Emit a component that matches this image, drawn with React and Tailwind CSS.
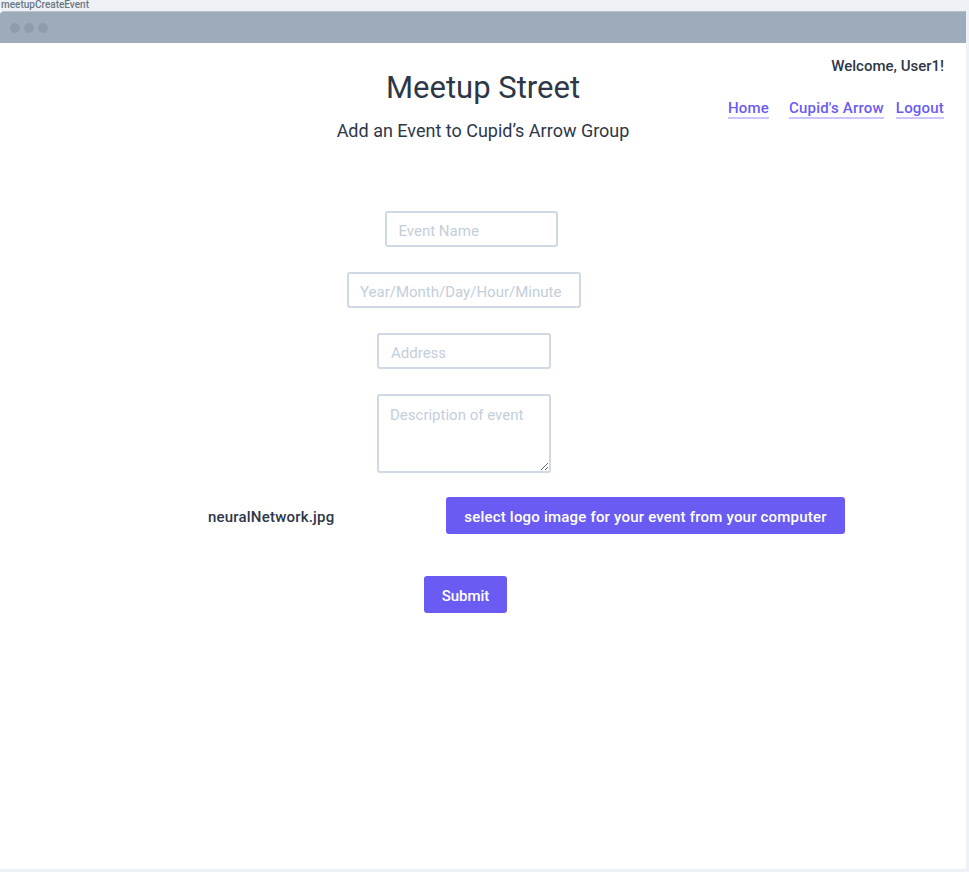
import React from 'react';

export default function App() {
  const font = { fontFamily: 'Roboto, "Liberation Sans", sans-serif' };

  return (
    <div className="w-[969px] h-[872px] bg-[#eef2f6] overflow-hidden" style={font}>
      <div className="h-[11px] text-[10px] leading-[10px] text-[#6b7785] font-medium pl-[1px]">meetupCreateEvent</div>

      {/* Window */}
      <div className="w-[966px] h-[858px] bg-white flex flex-col">
        <div className="h-[32px] bg-[#9eacb9] rounded-tl-[4px] flex items-center gap-[4px] pl-[10px] border-t border-[#b4c0cb]">
          <span className="w-[10px] h-[10px] rounded-full bg-[#8f9dab]" />
          <span className="w-[10px] h-[10px] rounded-full bg-[#8f9dab]" />
          <span className="w-[10px] h-[10px] rounded-full bg-[#8f9dab]" />
        </div>

        {/* Header */}
        <div className="grid grid-cols-[1fr_auto_1fr]">
          <div />
          <div className="flex flex-col items-center pt-[27px]">
            <h1 className="text-[31px] leading-[36px] text-[#2d3748] font-normal">Meetup Street</h1>
            <h2 className="mt-[13px] text-[18px] leading-[24px] text-[#2d3748]">Add an Event to Cupid’s Arrow Group</h2>
          </div>
          <div className="flex flex-col items-end pr-[22px] pt-[13px]">
            <div className="text-[15px] leading-[20px] font-medium text-[#2d3748]">Welcome, User1!</div>
            <nav className="mt-[23px] flex items-center text-[15px] leading-[18px] font-medium text-[#6a5cf2] tracking-[0.2px]">
              <a className="border-b-2 border-[#cbc6fb]">Home</a>
              <a className="ml-[20px] border-b-2 border-[#cbc6fb]">Cupid's Arrow</a>
              <a className="ml-[12px] border-b-2 border-[#cbc6fb]">Logout</a>
            </nav>
          </div>
        </div>

        {/* Form */}
        <div className="mt-[68px] flex flex-col items-center pr-[38px] gap-[25px]">
          <input
            placeholder="Event Name"
            className="ml-[14px] w-[173px] h-[36px] px-[12px] pt-[3px] text-[15px] border-2 border-[#cfd8e3] rounded-[3px] placeholder:text-[#c3cedb] outline-none"
          />
          <input
            placeholder="Year/Month/Day/Hour/Minute"
            className="w-[234px] h-[36px] px-[11px] pt-[3px] text-[15px] border-2 border-[#cfd8e3] rounded-[3px] placeholder:text-[#c3cedb] outline-none"
          />
          <input
            placeholder="Address"
            className="w-[174px] h-[36px] px-[12px] pt-[3px] text-[15px] border-2 border-[#cfd8e3] rounded-[3px] placeholder:text-[#c3cedb] outline-none"
          />
          <textarea
            placeholder="Description of event"
            className="w-[174px] h-[79px] px-[11px] pt-[9px] pb-[8px] text-[15px] leading-[20px] border-2 border-[#cfd8e3] rounded-[3px] placeholder:text-[#c3cedb] outline-none"
          />
        </div>

        <div className="mt-[24px] flex items-center pl-[208px]">
          <span className="w-[238px] pt-[3px] text-[15px] text-[#2d3748] font-medium tracking-[0.2px]">neuralNetwork.jpg</span>
          <button className="w-[399px] h-[37px] pt-[3px] rounded-[3px] bg-[#6a5cf2] text-white text-[15px] font-medium tracking-[0.2px]">
            select logo image for your event from your computer
          </button>
        </div>

        <div className="mt-[42px] flex pl-[424px]">
          <button className="w-[83px] h-[37px] pt-[3px] rounded-[3px] bg-[#6a5cf2] text-white text-[15px] font-medium">Submit</button>
        </div>
      </div>
    </div>
  );
}
